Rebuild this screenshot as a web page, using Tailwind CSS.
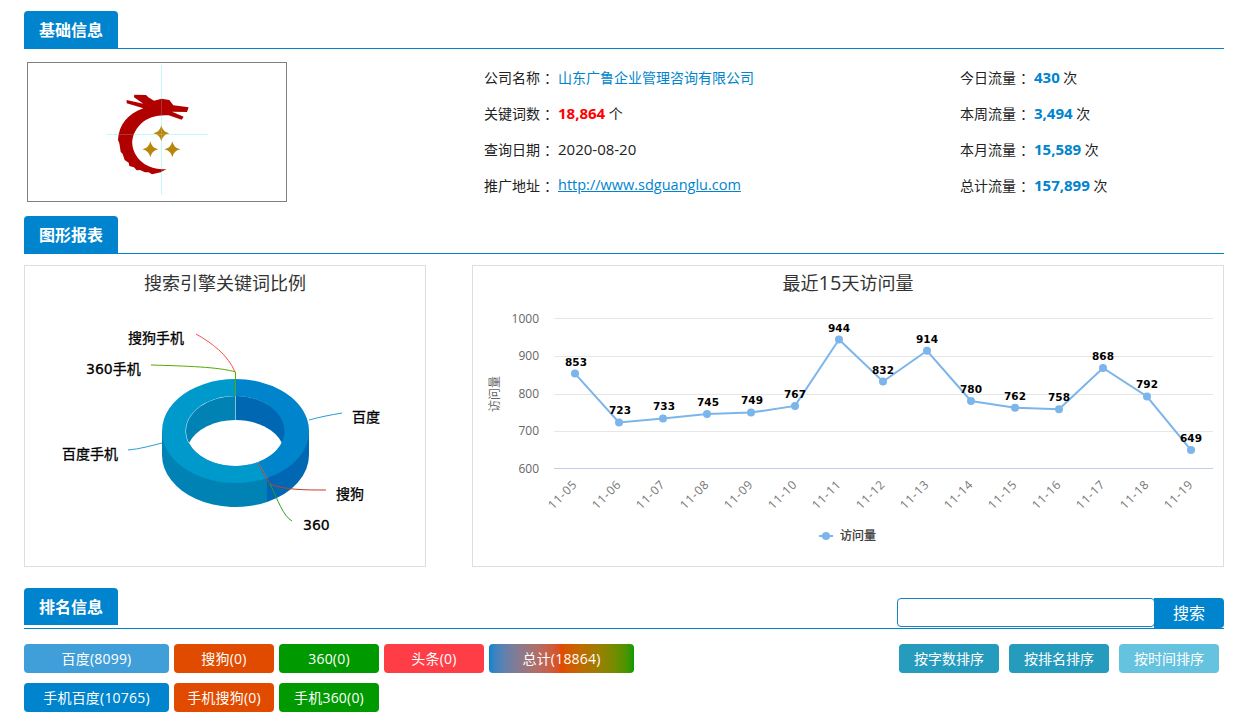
<!DOCTYPE html>
<html lang="zh">
<head>
<meta charset="utf-8">
<title>基础信息</title>
<script src="https://cdn.jsdelivr.net/npm/@tailwindcss/browser@4"></script>
</head>
<body class="bg-white font-['Open_Sans','Noto_Sans_CJK_SC',sans-serif] text-[14px] text-[#222]">
<main class="px-6 pt-[11px] w-[1248px]">

  <div class="h-[38px] border-b border-[#0084cd]">
    <div class="w-[94px] h-[37px] bg-[#0084cd] rounded-t-[4px] text-white text-[16px] font-bold flex items-center justify-center">基础信息</div>
  </div>
  <div class="flex items-start h-[153px]">
    <div class="mt-[13px] ml-[3px] w-[260px] h-[140px] border border-[#808080]">
      <svg viewBox="28 63 258 138" class="block w-full h-full">
        <path stroke="#c4fbfb" stroke-width="1" fill="none" d="M161.5 65V195M106 134.5H208"/>
        <g transform="translate(90 80) scale(0.3333)">
          <path fill="#b00000" d="M133 44 L168 45 L175 52 L192 62 L215 56 L238 60 L250 76 L296 82 L291 96 L246 95 L281 110 L275 119 L236 106 Q218 105 204 107 C150 115 125 160 127 192 C129 228 165 273 230 267 L212 277 L186 283 L176 277 L165 277 L150 270 L140 271 L132 262 L118 258 L116 248 L104 240 L98 222 L92 215 L88 190 L84 180 C86 135 115 100 160 85 L110 70 L110 60 L160 71 L132 52 Z"/>
          <path fill="#b8860b" d="M214 136 Q218 156 238 160 Q218 164 214 184 Q210 164 190 160 Q210 156 214 136Z"/>
          <path fill="#b8860b" d="M181 184 Q185 204 205 208 Q185 212 181 232 Q177 212 157 208 Q177 204 181 184Z"/>
          <path fill="#b8860b" d="M247 184 Q251 204 271 208 Q251 212 247 232 Q243 212 223 208 Q243 204 247 184Z"/>
        </g>
        <path stroke="#c4fbfb" stroke-opacity="0.2" stroke-width="1" fill="none" d="M161.5 65V195M106 134.5H208"/>
      </svg>
    </div>
    <div class="mt-[10px] ml-[197px] w-[476px]">
      <div class="h-9 flex items-center whitespace-pre"><span>公司名称</span><span class="w-[18px] pl-[4px]">：</span><span class="text-[#0084cd]">山东广鲁企业管理咨询有限公司</span></div>
      <div class="h-9 flex items-center whitespace-pre"><span>关键词数</span><span class="w-[18px] pl-[4px]">：</span><b class="text-[#f00] text-[15px]">18,864</b><span> 个</span></div>
      <div class="h-9 flex items-center whitespace-pre"><span>查询日期</span><span class="w-[18px] pl-[4px]">：</span><span class="text-[15px]">2020-08-20</span></div>
      <div class="h-9 flex items-center whitespace-pre"><span>推广地址</span><span class="w-[18px] pl-[4px]">：</span><a class="text-[#0084cd] underline text-[14.5px]" href="#">http://www.sdguanglu.com</a></div>
    </div>
    <div class="mt-[10px]">
      <div class="h-9 flex items-center whitespace-pre"><span>今日流量</span><span class="w-[18px] pl-[4px]">：</span><b class="text-[#0084cd] text-[15px]">430</b><span> 次</span></div>
      <div class="h-9 flex items-center whitespace-pre"><span>本周流量</span><span class="w-[18px] pl-[4px]">：</span><b class="text-[#0084cd] text-[15px]">3,494</b><span> 次</span></div>
      <div class="h-9 flex items-center whitespace-pre"><span>本月流量</span><span class="w-[18px] pl-[4px]">：</span><b class="text-[#0084cd] text-[15px]">15,589</b><span> 次</span></div>
      <div class="h-9 flex items-center whitespace-pre"><span>总计流量</span><span class="w-[18px] pl-[4px]">：</span><b class="text-[#0084cd] text-[15px]">157,899</b><span> 次</span></div>
    </div>
  </div>

  <div class="mt-[14px] h-[38px] border-b border-[#0084cd]">
    <div class="w-[94px] h-[37px] bg-[#0084cd] rounded-t-[4px] text-white text-[16px] font-bold flex items-center justify-center">图形报表</div>
  </div>
  <div class="mt-[11px] flex gap-[46px] h-[302px]">
    <div class="w-[402px] border border-[#ddd]">
      <svg viewBox="25 266 400 300" class="block w-full h-full">
        <text x="225" y="290" text-anchor="middle" font-size="18" fill="#333">搜索引擎关键词比例</text>
        <path fill="#0082b5" d="M162 431V455A73.5 52 0 0 0 267 502V478Z"/>
        <path fill="#0068b3" d="M309 431V455A73.5 52 0 0 1 267 502V478Z"/>
        <ellipse cx="235.5" cy="431" rx="49.5" ry="35" fill="#0082b5"/>
        <path fill="#0068b3" d="M235.5 396A49.5 35 0 0 1 235.5 466Z"/>
        <path fill="#fff" d="M189 443A49.5 35 0 0 1 282 443A49.5 35 0 0 1 189 443Z"/>
        <path fill="#0084cc" d="M235.5 379A73.5 52 0 0 1 267 478L258 462A49.5 35 0 0 0 235.5 396Z"/>
        <path fill="#0099cc" d="M235.5 379A73.5 52 0 1 0 267 478L258 462A49.5 35 0 1 1 235.5 396Z"/>
        <path stroke="#7fc4dc" fill="none" d="M235.5 396V420"/>
        <g fill="none" stroke-width="1">
          <path stroke="#ff4d4d" d="M196 334C212 343 228 355 235 372"/>
          <path stroke="#5aa800" d="M151 365C185 366 220 367 235.5 372V396"/>
          <path stroke="#2a9ad8" d="M309 420C320 417 330 415 342 413"/>
          <path stroke="#2aa0d0" d="M128 450C140 449 150 446 162 443"/>
          <path stroke="#c04030" d="M258 463L270 484C285 490 305 490 326 490"/>
          <path stroke="#2a9d2a" d="M270 484C278 500 283 516 292 521"/>
        </g>
        <g font-size="14" fill="#000" stroke="#000" stroke-width="0.3">
          <text x="128" y="343">搜狗手机</text>
          <text x="86" y="374"><tspan font-family="'DejaVu Sans'">360</tspan>手机</text>
          <text x="352" y="422">百度</text>
          <text x="62" y="459">百度手机</text>
          <text x="336" y="499">搜狗</text>
          <text x="303" y="530" font-family="'DejaVu Sans'">360</text>
        </g>
      </svg>
    </div>
    <div class="w-[752px] border border-[#ddd]">
      <svg viewBox="473 266 750 300" class="block w-full h-full">
        <text x="848" y="290" text-anchor="middle" font-size="18" fill="#333">最近<tspan font-size="20">15</tspan>天访问量</text>
        <g stroke="#e6e6e6" stroke-width="1">
          <path d="M554 318.5H1213M554 356.5H1213M554 394.5H1213M554 431.5H1213"/>
        </g>
        <path stroke="#c0d0e8" d="M554 468.5H1213"/>
        <g font-size="12" fill="#666" text-anchor="end">
          <text x="539" y="323">1000</text>
          <text x="539" y="360">900</text>
          <text x="539" y="398">800</text>
          <text x="539" y="435">700</text>
          <text x="539" y="473">600</text>
        </g>
        <text transform="translate(499 394) rotate(-90)" text-anchor="middle" font-size="12" fill="#666">访问量</text>
        <polyline fill="none" stroke="#7cb5ec" stroke-width="2" points="575,373.6 619,422.4 663,418.6 707,414.1 751,412.6 795,405.9 839,339.5 883,381.5 927,350.8 971,401 1015,407.8 1059,409.3 1103,368 1147,396.5 1191,450.1"/>
        <g fill="#7cb5ec">
          <circle cx="575" cy="373.6" r="4"/><circle cx="619" cy="422.4" r="4"/><circle cx="663" cy="418.6" r="4"/>
          <circle cx="707" cy="414.1" r="4"/><circle cx="751" cy="412.6" r="4"/><circle cx="795" cy="405.9" r="4"/>
          <circle cx="839" cy="339.5" r="4"/><circle cx="883" cy="381.5" r="4"/><circle cx="927" cy="350.8" r="4"/>
          <circle cx="971" cy="401" r="4"/><circle cx="1015" cy="407.8" r="4"/><circle cx="1059" cy="409.3" r="4"/>
          <circle cx="1103" cy="368" r="4"/><circle cx="1147" cy="396.5" r="4"/><circle cx="1191" cy="450.1" r="4"/>
        </g>
        <g font-size="10.5" font-weight="700" font-family="'DejaVu Sans'" fill="#000" text-anchor="middle">
          <text x="576" y="366">853</text><text x="620" y="414">723</text><text x="664" y="410">733</text>
          <text x="708" y="406">745</text><text x="752" y="404">749</text><text x="795" y="398">767</text>
          <text x="839" y="332">944</text><text x="883" y="374">832</text><text x="927" y="343">914</text>
          <text x="971" y="393">780</text><text x="1015" y="400">762</text><text x="1059" y="401">758</text>
          <text x="1103" y="360">868</text><text x="1147" y="388">792</text><text x="1191" y="442">649</text>
        </g>
        <g font-size="12" fill="#777" text-anchor="end" letter-spacing="0.8">
          <text transform="translate(578 485) rotate(-45)">11-05</text>
          <text transform="translate(622 485) rotate(-45)">11-06</text>
          <text transform="translate(666 485) rotate(-45)">11-07</text>
          <text transform="translate(710 485) rotate(-45)">11-08</text>
          <text transform="translate(754 485) rotate(-45)">11-09</text>
          <text transform="translate(798 485) rotate(-45)">11-10</text>
          <text transform="translate(842 485) rotate(-45)">11-11</text>
          <text transform="translate(886 485) rotate(-45)">11-12</text>
          <text transform="translate(930 485) rotate(-45)">11-13</text>
          <text transform="translate(974 485) rotate(-45)">11-14</text>
          <text transform="translate(1018 485) rotate(-45)">11-15</text>
          <text transform="translate(1062 485) rotate(-45)">11-16</text>
          <text transform="translate(1106 485) rotate(-45)">11-17</text>
          <text transform="translate(1150 485) rotate(-45)">11-18</text>
          <text transform="translate(1194 485) rotate(-45)">11-19</text>
        </g>
        <path stroke="#7cb5ec" stroke-width="2" d="M819 536H833"/>
        <circle cx="826" cy="536" r="4" fill="#7cb5ec"/>
        <text x="840" y="540" font-size="12" fill="#333" stroke="#333" stroke-width="0.25">访问量</text>
      </svg>
    </div>
  </div>

  <div class="mt-[21px] h-[41px] border-b border-[#0084cd] flex justify-between items-start">
    <div class="w-[94px] h-[37px] bg-[#0084cd] rounded-t-[4px] text-white text-[16px] font-bold flex items-center justify-center">排名信息</div>
    <div class="mt-[10px] flex items-start">
      <input type="text" class="w-[258px] h-[29px] border border-[#1a7fc0] rounded-[4px] bg-white outline-none">
      <div class="-ml-px w-[70px] h-[30px] bg-[#0084cd] rounded-[4px] rounded-l-none text-white text-[16px] flex items-center justify-center">搜索</div>
    </div>
  </div>
  <div class="mt-[15px] flex justify-between items-start">
    <div class="flex flex-col gap-[10px] text-white tracking-[0.2px]">
      <div class="flex gap-[5px]">
        <div class="w-[145px] h-[29px] rounded-[4px] bg-[#409fd8] flex items-center justify-center">百度(8099)</div>
        <div class="w-[100px] h-[29px] rounded-[4px] bg-[#e04b00] flex items-center justify-center">搜狗(0)</div>
        <div class="w-[100px] h-[29px] rounded-[4px] bg-[#009900] flex items-center justify-center">360(0)</div>
        <div class="w-[100px] h-[29px] rounded-[4px] bg-[#ff3d47] flex items-center justify-center">头条(0)</div>
        <div class="w-[145px] h-[29px] rounded-[4px] bg-linear-to-r from-[#0084cd] via-[#e04b00] to-[#009900] flex items-center justify-center">总计(18864)</div>
      </div>
      <div class="flex gap-[5px]">
        <div class="w-[145px] h-[29px] rounded-[4px] bg-[#0084cd] flex items-center justify-center">手机百度(10765)</div>
        <div class="w-[100px] h-[29px] rounded-[4px] bg-[#e04b00] flex items-center justify-center">手机搜狗(0)</div>
        <div class="w-[100px] h-[29px] rounded-[4px] bg-[#009900] flex items-center justify-center">手机360(0)</div>
      </div>
    </div>
    <div class="flex gap-[10px] pr-[5px] text-white">
      <div class="w-[100px] h-[29px] rounded-[4px] bg-[#259bbd] flex items-center justify-center">按字数排序</div>
      <div class="w-[100px] h-[29px] rounded-[4px] bg-[#259bbd] flex items-center justify-center">按排名排序</div>
      <div class="w-[100px] h-[29px] rounded-[4px] bg-[#65c3e0] flex items-center justify-center">按时间排序</div>
    </div>
  </div>
</main>
</body>
</html>
